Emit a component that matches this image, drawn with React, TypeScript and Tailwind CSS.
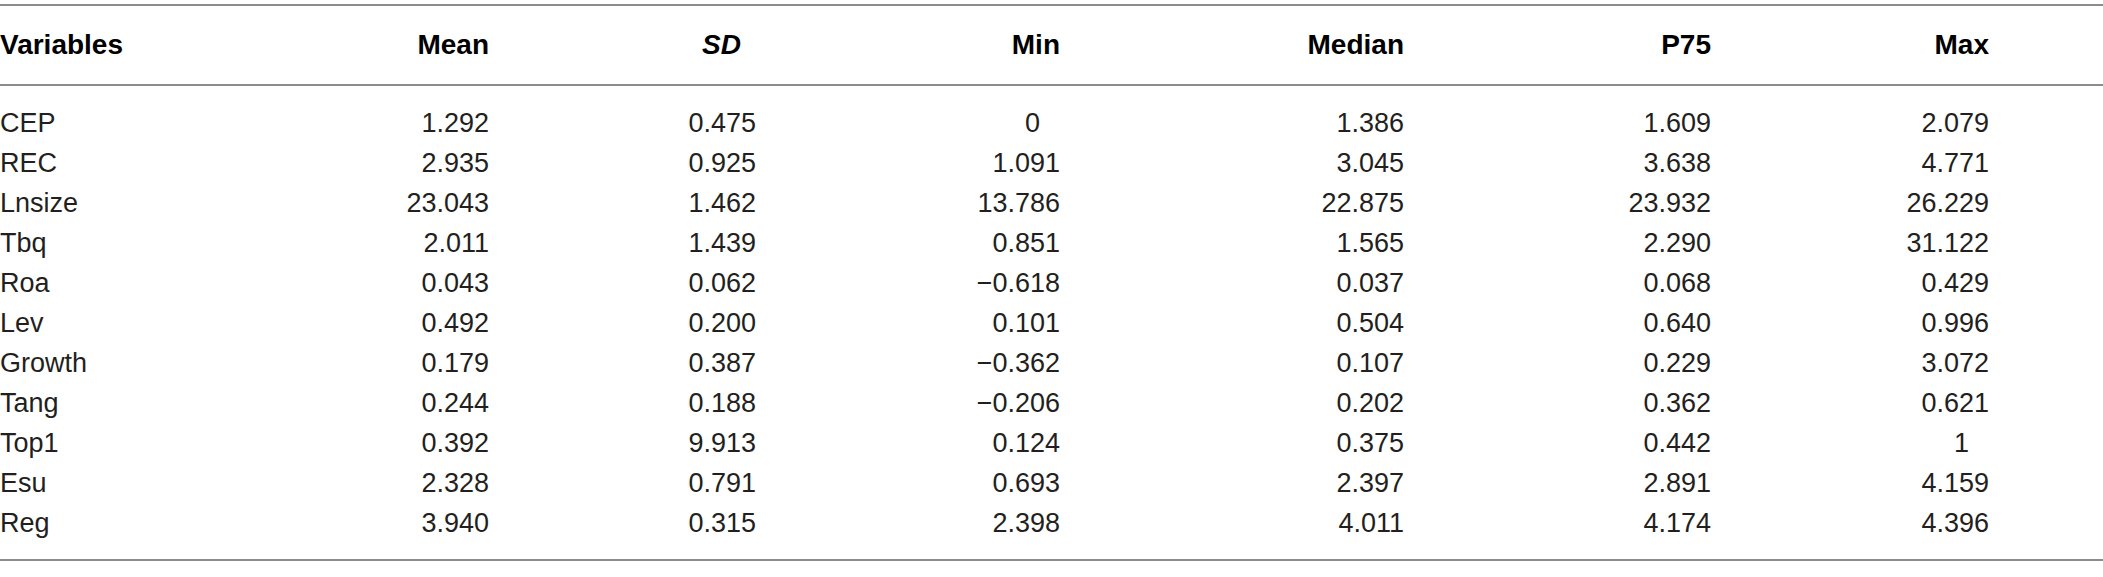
import React from "react";

const rows: string[][] = [
  ["CEP", "1.292", "0.475", "0", "1.386", "1.609", "2.079"],
  ["REC", "2.935", "0.925", "1.091", "3.045", "3.638", "4.771"],
  ["Lnsize", "23.043", "1.462", "13.786", "22.875", "23.932", "26.229"],
  ["Tbq", "2.011", "1.439", "0.851", "1.565", "2.290", "31.122"],
  ["Roa", "0.043", "0.062", "\u22120.618", "0.037", "0.068", "0.429"],
  ["Lev", "0.492", "0.200", "0.101", "0.504", "0.640", "0.996"],
  ["Growth", "0.179", "0.387", "\u22120.362", "0.107", "0.229", "3.072"],
  ["Tang", "0.244", "0.188", "\u22120.206", "0.202", "0.362", "0.621"],
  ["Top1", "0.392", "9.913", "0.124", "0.375", "0.442", "1"],
  ["Esu", "2.328", "0.791", "0.693", "2.397", "2.891", "4.159"],
  ["Reg", "3.940", "0.315", "2.398", "4.011", "4.174", "4.396"],
];

// right edges: Mean 489, SD 756, Min 1060, Median 1404, P75 1711, Max 1989
const grid = "grid grid-cols-[300px_189px_267px_304px_344px_307px_278px_1fr]";

function cellClass(i: number, c: string) {
  if (i === 0) return "text-left";
  if (c.length === 1) return "text-right pr-[20px]";
  return "text-right";
}

export default function App() {
  return (
    <div
      className="w-[2103px] h-[577px] bg-white pt-[4px]"
      style={{ fontFamily: '"Liberation Sans", Arial, sans-serif' }}
    >
      <div className="h-[2px] bg-[#8c8c8c]" />
      <div className={`${grid} h-[78px] items-center text-[28px] font-bold text-black leading-none`}>
        <div className="text-left">Variables</div>
        <div className="text-right">Mean</div>
        <div className="text-right pr-[15px] italic">SD</div>
        <div className="text-right">Min</div>
        <div className="text-right">Median</div>
        <div className="text-right">P75</div>
        <div className="text-right">Max</div>
        <div />
      </div>
      <div className="h-[2px] bg-[#8c8c8c]" />
      <div className="pt-[17px] pb-[16px] text-[27px] text-[#231f20]">
        {rows.map((r) => (
          <div key={r[0]} className={`${grid} h-[40px] items-center leading-none`}>
            {r.map((c, i) => (
              <div key={i} className={cellClass(i, c)}>
                {c}
              </div>
            ))}
            <div />
          </div>
        ))}
      </div>
      <div className="h-[2px] bg-[#8c8c8c]" />
    </div>
  );
}
